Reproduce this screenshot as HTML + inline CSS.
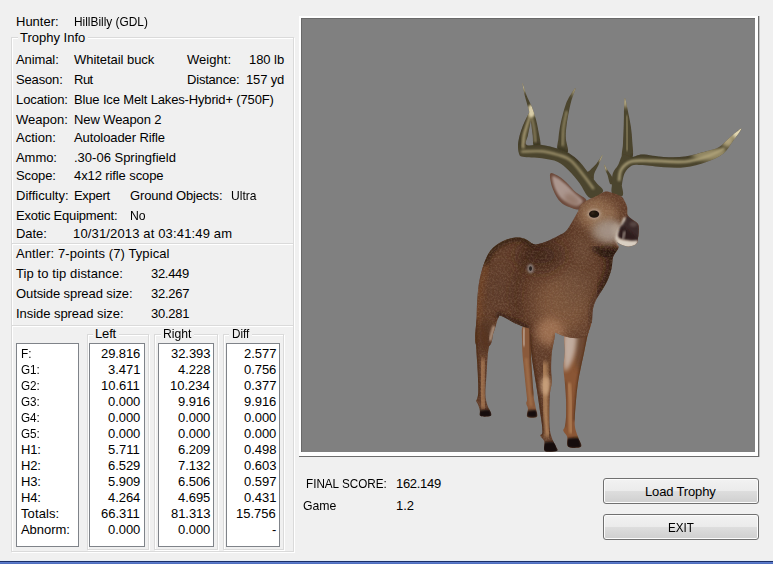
<!DOCTYPE html>
<html><head><meta charset="utf-8"><title>Trophy</title>
<style>
html,body{margin:0;padding:0}
body{width:773px;height:564px;overflow:hidden;background:#f0f0f0;position:relative;font-family:"Liberation Sans",sans-serif;font-size:13px;color:#000}
.t{position:absolute;white-space:pre;line-height:16px;height:16px}
.fr{position:absolute;box-sizing:border-box;border:1px solid #dadada;box-shadow:inset 1px 1px 0 #fff, 1px 1px 0 #fff}
.hl{position:absolute;height:1px;background:#dadada;box-shadow:0 1px 0 #fff}
.cap{position:absolute;background:#f0f0f0}
.lb{position:absolute;background:#fff;border:1px solid #7f8389;box-sizing:border-box}
.vo{position:absolute;left:299px;top:16px;width:460px;height:441px;box-sizing:border-box;background:#fff;border-right:1px solid #6e6e6e;border-bottom:1px solid #6e6e6e;box-shadow:1px 0 0 #c4c4c4}
.view{position:absolute;left:2px;top:2px;width:454px;height:434px;box-sizing:border-box;background:#808080;border-left:1px solid #696969;border-top:1px solid #696969;overflow:hidden}
.btn{position:absolute;box-sizing:border-box;border:1px solid #707070;border-radius:3px;background:linear-gradient(#f2f2f2 0%,#ebebeb 48%,#dddddd 52%,#cfcfcf 100%);box-shadow:inset 0 0 0 1px #fcfcfc}
.bar{position:absolute;left:0;top:560px;width:773px;height:4px;background:linear-gradient(#e4ecf6 0,#e4ecf6 1px,#1c2f66 1px,#1c2f66 2px,#6182d2 2px,#4a68ba 4px)}
</style></head><body>
<div class="fr" style="left:11px;top:37px;width:283px;height:515px"></div>
<div class="hl" style="left:12px;top:243px;width:281px"></div>
<div class="hl" style="left:12px;top:325px;width:281px"></div>
<div class="cap" style="left:18px;top:30px;width:70px;height:14px"></div>
<div class="fr" style="left:87px;top:334px;width:62px;height:216px"></div>
<div class="fr" style="left:154px;top:334px;width:64px;height:216px"></div>
<div class="fr" style="left:223px;top:334px;width:61px;height:216px"></div>
<div class="cap" style="left:93px;top:327px;width:26px;height:14px"></div>
<div class="cap" style="left:161px;top:327px;width:33px;height:14px"></div>
<div class="cap" style="left:229px;top:327px;width:23px;height:14px"></div>
<div class="lb" style="left:16px;top:343px;width:63px;height:204px"></div>
<div class="lb" style="left:89px;top:343px;width:56px;height:204px"></div>
<div class="lb" style="left:158px;top:343px;width:56px;height:204px"></div>
<div class="lb" style="left:226px;top:343px;width:54px;height:204px"></div>
<div class="vo"><div class="view"><svg width="773" height="564" viewBox="0 0 773 564" style="position:absolute;left:-302px;top:-19px"><defs>
<filter id="b1" x="-30%" y="-30%" width="160%" height="160%"><feGaussianBlur stdDeviation="1"/></filter>
<filter id="b2" x="-40%" y="-40%" width="180%" height="180%"><feGaussianBlur stdDeviation="2.2"/></filter>
<filter id="b4" x="-50%" y="-50%" width="200%" height="200%"><feGaussianBlur stdDeviation="4.5"/></filter>
<filter id="b8" x="-60%" y="-60%" width="220%" height="220%"><feGaussianBlur stdDeviation="8"/></filter>
<filter id="nz" x="0" y="0" width="100%" height="100%"><feTurbulence type="fractalNoise" baseFrequency="0.55" numOctaves="2" seed="7" result="n"/><feColorMatrix type="matrix" values="0 0 0 0 0.62  0 0 0 0 0.44  0 0 0 0 0.3  1.6 0 0 0 -0.62"/></filter>
<filter id="sm" x="-5%" y="-5%" width="110%" height="110%"><feGaussianBlur stdDeviation="0.4"/></filter>
<clipPath id="ca"><path d="M522.4,82.7 C522.7,82.5 524.9,91.0 526.4,94.9 C528.0,98.9 530.0,102.3 531.5,106.1 C533.1,110.0 534.4,114.0 535.5,118.1 C536.7,122.2 537.6,126.3 538.4,130.9 C539.2,135.4 541.1,142.7 540.3,145.2 C539.6,147.7 535.2,147.6 533.9,146.0 C532.7,144.4 533.1,139.5 532.7,135.6 C532.2,131.8 531.7,127.1 531.1,122.9 C530.4,118.6 529.9,114.6 528.8,110.1 C527.8,105.6 525.9,100.3 524.8,95.7 C523.8,91.2 522.2,82.8 522.4,82.7Z"/><path d="M575.6,88.2 C575.6,89.4 572.7,96.1 571.4,100.5 C570.2,105.0 569.1,110.4 568.2,114.9 C567.4,119.4 566.7,123.7 566.3,127.7 C565.9,131.6 565.6,134.8 565.9,138.8 C566.1,142.9 569.1,150.1 567.8,151.9 C566.4,153.7 559.4,151.9 557.9,149.7 C556.3,147.5 558.0,142.5 558.4,138.8 C558.7,135.2 559.1,131.6 559.8,127.7 C560.5,123.7 561.5,119.1 562.7,114.9 C563.8,110.6 565.2,105.7 566.6,102.1 C568.1,98.5 569.9,95.7 571.4,93.4 C572.9,91.0 575.6,87.0 575.6,88.2Z"/><path d="M602.6,155.1 C602.9,155.3 599.9,161.8 598.5,164.9 C597.1,167.9 595.1,170.9 594.3,173.4 C593.4,175.9 594.4,179.8 593.2,179.8 C592.0,179.8 587.3,175.0 586.8,173.4 C586.3,171.8 588.4,171.8 590.0,170.2 C591.6,168.6 594.3,166.3 596.4,163.8 C598.5,161.3 602.2,154.9 602.6,155.1Z"/><path d="M624.9,98.1 C625.6,98.4 627.1,107.1 628.1,111.9 C629.1,116.7 630.1,121.8 630.9,126.8 C631.6,131.8 632.1,136.6 632.3,141.7 C632.6,146.8 634.0,154.9 632.3,157.7 C630.7,160.4 623.9,160.6 622.3,158.3 C620.8,156.0 622.7,149.8 623.0,143.8 C623.2,137.9 623.7,128.2 623.8,122.6 C624.0,116.9 623.9,113.9 624.0,109.8 C624.2,105.7 624.2,97.7 624.9,98.1Z"/><path d="M604.3,164.5 C604.6,164.5 606.4,168.2 607.7,170.2 C608.9,172.2 611.0,174.6 611.9,176.6 C612.9,178.5 613.7,180.7 613.4,181.9 C613.1,183.2 611.2,185.1 610.2,184.0 C609.3,183.0 608.4,177.8 607.7,175.5 C606.9,173.2 606.1,172.1 605.5,170.2 C605.0,168.4 603.9,164.5 604.3,164.5Z"/><path d="M532.2,107.9 C532.3,108.9 531.8,113.5 531.4,116.5 C531.0,119.5 530.4,122.9 529.8,126.1 C529.2,129.3 528.4,132.5 527.9,135.6 C527.3,138.8 524.3,143.4 526.6,144.9 C528.9,146.4 536.7,144.3 541.9,144.9 C547.1,145.5 553.4,147.3 557.9,148.7 C562.4,150.1 565.3,150.9 569.0,153.2 C572.8,155.5 576.7,158.8 580.2,162.4 C583.7,166.1 587.4,171.6 590.2,175.1 C593.0,178.6 594.9,180.9 597.0,183.6 C599.1,186.3 604.1,189.1 603.0,191.5 C601.8,193.9 594.1,199.5 590.2,198.1 C586.3,196.7 582.9,187.6 579.4,183.0 C575.8,178.4 572.3,174.1 568.7,170.6 C565.1,167.1 562.3,164.0 557.9,162.0 C553.4,159.9 547.8,159.2 541.9,158.3 C536.1,157.4 526.6,157.6 522.8,156.7 C518.9,155.9 519.7,155.1 518.9,153.2 C518.1,151.3 517.9,148.1 518.0,145.2 C518.1,142.3 518.8,138.8 519.6,135.6 C520.4,132.4 521.6,129.1 522.8,126.1 C524.0,123.0 525.5,119.9 526.8,117.3 C528.0,114.6 529.5,111.7 530.4,110.1 C531.3,108.5 532.0,106.8 532.2,107.9Z"/><path d="M631.9,157.0 C635.2,157.0 637.2,154.5 642.6,154.5 C647.9,154.5 656.7,156.7 663.8,157.0 C670.9,157.4 678.0,157.6 685.1,156.6 C692.2,155.6 700.7,152.9 706.4,151.3 C712.1,149.7 715.2,149.3 719.1,147.0 C723.0,144.7 726.1,140.5 729.8,137.4 C733.5,134.4 741.1,127.7 741.5,128.5 C741.9,129.3 735.4,138.0 732.3,142.1 C729.3,146.3 727.7,150.1 723.4,153.4 C719.1,156.7 712.8,159.6 706.4,161.9 C700.0,164.2 692.2,166.3 685.1,167.2 C678.0,168.1 670.9,167.6 663.8,167.2 C656.7,166.9 647.9,165.4 642.6,165.1 C637.2,164.8 634.9,164.1 631.9,165.5 C628.9,167.0 626.2,170.1 624.5,173.6 C622.8,177.1 622.1,184.3 621.7,186.4 C621.3,188.5 621.8,184.6 621.9,186.2 C622.1,187.7 624.1,194.5 622.6,195.7 C621.0,197.0 614.1,195.4 612.3,193.6 C610.6,191.8 612.0,186.3 611.9,185.1 C611.8,183.9 611.6,188.3 611.7,186.4 C611.8,184.5 611.7,177.2 612.8,173.6 C613.8,170.1 616.4,168.2 618.1,165.1 C619.8,162.0 620.7,156.2 623.0,154.9 C625.3,153.5 628.7,157.1 631.9,157.0Z"/></clipPath><clipPath id="cb"><path d="M476.1,345.0 C473.9,340.2 476.5,324.1 476.7,316.5 C476.9,308.9 476.9,305.5 477.3,299.5 C477.8,293.4 478.3,286.3 479.5,280.3 C480.6,274.3 482.3,268.3 484.1,263.3 C486.0,258.3 487.7,254.1 490.5,250.5 C493.4,247.0 497.3,244.1 501.2,242.0 C505.1,239.9 510.0,238.3 513.9,237.8 C517.8,237.2 521.4,237.8 524.6,238.8 C527.8,239.9 530.8,243.3 533.1,244.1 C535.4,245.0 535.6,244.9 538.4,244.1 C541.2,243.4 546.4,241.5 550.1,239.9 C553.8,238.3 558.0,236.2 560.7,234.6 C563.5,233.0 564.7,232.5 566.6,230.4 C568.5,228.4 570.0,225.5 571.9,222.3 C573.8,219.2 576.1,214.9 577.9,211.7 C579.6,208.5 579.1,206.0 582.6,203.2 C586.0,200.4 594.8,196.8 598.5,194.9 C602.2,193.0 602.7,192.2 604.7,191.8 C606.8,191.4 608.2,191.7 610.9,192.4 C613.6,193.1 618.6,194.7 620.9,196.1 C623.1,197.6 623.5,199.2 624.6,201.1 C625.6,202.9 626.6,205.2 627.1,207.3 C627.5,209.4 627.1,212.0 627.3,213.5 C627.6,215.0 627.6,215.1 628.5,216.2 C629.5,217.4 631.7,219.1 633.3,220.3 C634.8,221.5 636.7,222.3 637.6,223.4 C638.5,224.5 638.7,225.3 638.8,227.1 C639.0,229.0 638.8,232.5 638.6,234.6 C638.4,236.6 637.9,238.3 637.7,239.5 C637.6,240.8 638.3,241.1 637.7,242.0 C637.2,242.9 636.1,244.4 634.5,245.1 C632.9,245.8 630.6,246.5 628.3,246.4 C626.0,246.3 622.7,245.2 620.9,244.5 C619.0,243.8 617.5,241.7 617.1,242.3 C616.7,242.8 619.2,245.3 618.5,247.7 C617.9,250.1 614.4,253.0 613.2,256.6 C612.0,260.1 612.5,264.9 611.4,269.0 C610.4,273.1 608.8,277.6 607.0,281.4 C605.2,285.3 602.7,288.8 600.8,292.1 C598.9,295.3 596.8,298.0 595.5,300.9 C594.1,303.9 593.4,306.2 592.8,309.8 C592.2,313.3 592.4,319.8 591.9,322.2 C591.4,324.6 590.7,321.9 589.9,324.1 C589.1,326.3 589.4,333.1 587.1,335.5 C584.8,337.8 580.1,338.2 576.3,338.3 C572.5,338.4 568.2,337.4 564.4,336.3 C560.6,335.2 557.3,333.1 553.6,331.8 C549.9,330.4 546.3,328.9 542.3,328.4 C538.3,327.8 533.8,329.1 529.5,328.4 C525.2,327.7 521.9,326.2 516.7,324.1 C511.5,322.0 502.1,314.9 498.3,315.6 C494.5,316.3 495.5,323.4 494.0,328.4 C492.6,333.3 492.8,342.6 489.8,345.4 C486.8,348.2 478.2,349.8 476.1,345.0Z"/><path d="M480.0,296.0 C477.7,298.5 478.2,311.0 477.5,318.0 C476.8,325.0 476.1,331.5 476.0,337.7 C475.9,344.0 476.4,349.6 476.7,355.5 C477.0,361.4 477.5,367.3 477.8,373.2 C478.0,379.1 478.4,386.8 478.3,390.9 C478.2,395.1 477.8,396.4 477.4,398.0 C477.1,399.7 476.1,399.8 476.2,400.9 C476.3,401.9 477.3,402.6 477.9,404.2 C478.6,405.8 479.5,408.4 479.9,410.4 C480.3,412.4 478.9,415.2 480.6,416.1 C482.3,417.0 488.5,416.7 490.2,416.1 C491.9,415.5 491.2,414.1 490.9,412.6 C490.5,411.0 488.9,409.0 488.0,406.9 C487.2,404.8 486.4,402.4 485.9,399.8 C485.5,397.1 485.3,395.4 485.4,390.9 C485.5,386.5 486.2,379.1 486.6,373.2 C487.0,367.3 487.2,360.5 487.7,355.5 C488.2,350.4 488.7,347.2 489.8,343.0 C490.9,338.9 493.0,334.5 494.3,330.6 C495.5,326.8 496.5,322.7 497.3,320.0 C498.0,317.3 499.9,317.0 498.9,314.2 C497.9,311.3 494.3,305.9 491.2,302.8 C488.1,299.8 482.3,293.5 480.0,296.0Z"/><path d="M531.2,320.0 C527.2,322.5 530.0,329.5 530.0,334.9 C530.0,340.3 530.6,346.5 531.2,352.3 C531.8,358.1 532.7,363.5 533.7,369.7 C534.6,375.9 536.0,383.4 536.9,389.6 C537.9,395.8 538.6,401.2 539.4,407.0 C540.2,412.8 541.4,420.0 541.9,424.3 C542.4,428.7 542.6,431.1 542.4,433.0 C542.1,434.9 540.1,434.3 540.4,435.8 C540.7,437.2 543.6,439.2 544.4,441.7 C545.1,444.3 542.8,449.4 544.9,450.9 C546.9,452.5 554.9,451.6 556.8,450.9 C558.7,450.2 556.8,448.7 556.1,446.7 C555.3,444.8 553.4,442.2 552.3,439.3 C551.3,436.4 550.3,433.5 549.8,429.3 C549.3,425.2 549.3,420.2 549.3,414.4 C549.3,408.6 549.4,399.9 549.8,394.5 C550.3,389.2 551.6,386.3 551.8,382.1 C552.0,378.0 551.1,374.7 551.1,369.7 C551.1,364.7 551.2,358.1 551.8,352.3 C552.5,346.5 554.4,340.3 554.8,334.9 C555.2,329.5 558.3,322.5 554.3,320.0 C550.4,317.5 535.3,317.5 531.2,320.0Z"/></clipPath><clipPath id="ce"><path d="M550.2,173.8 C551.0,171.9 554.0,173.8 556.6,175.1 C559.2,176.5 562.7,179.0 566.0,181.9 C569.2,184.8 572.8,189.5 576.2,192.6 C579.6,195.6 585.5,197.4 586.4,200.2 C587.3,203.0 584.6,208.5 581.5,209.6 C578.4,210.6 571.5,208.3 567.7,206.6 C563.8,204.9 560.9,202.7 558.3,199.4 C555.7,196.0 553.3,190.9 551.9,186.6 C550.6,182.3 549.4,175.7 550.2,173.8Z"/></clipPath><clipPath id="cf"><path d="M522.6,327.1 C521.1,329.5 522.1,336.5 522.1,341.3 C522.1,346.0 522.2,350.1 522.6,355.5 C523.0,360.8 523.8,367.3 524.4,373.2 C525.0,379.1 525.7,386.5 526.2,390.9 C526.6,395.4 527.1,397.7 527.1,399.8 C527.1,401.9 526.0,401.9 526.2,403.3 C526.3,404.8 527.7,406.4 527.9,408.7 C528.2,410.9 525.9,415.4 527.4,416.8 C528.9,418.2 535.4,418.2 536.8,416.8 C538.2,415.4 536.4,411.5 535.9,408.7 C535.5,405.8 534.6,402.7 534.1,399.8 C533.7,396.8 533.6,395.4 533.3,390.9 C532.9,386.5 532.4,379.1 532.0,373.2 C531.6,367.3 531.1,361.4 531.0,355.5 C530.8,349.6 531.0,342.5 531.0,337.7 C531.0,333.0 532.3,328.9 531.0,327.1 C529.6,325.3 524.1,324.7 522.6,327.1Z"/><path d="M564.8,329.9 C563.1,334.1 565.0,346.1 564.8,352.3 C564.5,358.5 563.5,362.2 563.5,367.2 C563.5,372.2 564.3,376.7 564.8,382.1 C565.2,387.5 565.8,393.7 566.0,399.5 C566.2,405.3 566.2,412.3 566.0,416.9 C565.8,421.4 565.2,424.5 564.8,426.8 C564.3,429.2 562.8,429.2 563.3,430.8 C563.7,432.5 566.4,434.1 567.2,436.8 C568.1,439.4 566.0,445.1 568.2,446.7 C570.5,448.4 579.2,448.2 580.9,446.7 C582.6,445.3 579.3,440.9 578.4,438.0 C577.5,435.1 576.1,432.4 575.4,429.3 C574.8,426.2 574.6,423.9 574.7,419.4 C574.8,414.8 575.4,407.8 575.9,402.0 C576.4,396.2 576.8,390.4 577.7,384.6 C578.5,378.8 579.8,372.6 580.9,367.2 C582.0,361.8 583.0,357.7 584.1,352.3 C585.2,346.9 586.5,340.0 587.6,334.9 C588.7,329.9 592.7,323.2 590.6,322.0 C588.4,320.7 579.0,326.1 574.7,327.5 C570.4,328.8 566.4,325.8 564.8,329.9Z"/></clipPath></defs><g filter="url(#sm)">
<path d="M522.4,82.7 C522.7,82.5 524.9,91.0 526.4,94.9 C528.0,98.9 530.0,102.3 531.5,106.1 C533.1,110.0 534.4,114.0 535.5,118.1 C536.7,122.2 537.6,126.3 538.4,130.9 C539.2,135.4 541.1,142.7 540.3,145.2 C539.6,147.7 535.2,147.6 533.9,146.0 C532.7,144.4 533.1,139.5 532.7,135.6 C532.2,131.8 531.7,127.1 531.1,122.9 C530.4,118.6 529.9,114.6 528.8,110.1 C527.8,105.6 525.9,100.3 524.8,95.7 C523.8,91.2 522.2,82.8 522.4,82.7Z" fill="#4c442d" />
<path d="M575.6,88.2 C575.6,89.4 572.7,96.1 571.4,100.5 C570.2,105.0 569.1,110.4 568.2,114.9 C567.4,119.4 566.7,123.7 566.3,127.7 C565.9,131.6 565.6,134.8 565.9,138.8 C566.1,142.9 569.1,150.1 567.8,151.9 C566.4,153.7 559.4,151.9 557.9,149.7 C556.3,147.5 558.0,142.5 558.4,138.8 C558.7,135.2 559.1,131.6 559.8,127.7 C560.5,123.7 561.5,119.1 562.7,114.9 C563.8,110.6 565.2,105.7 566.6,102.1 C568.1,98.5 569.9,95.7 571.4,93.4 C572.9,91.0 575.6,87.0 575.6,88.2Z" fill="#4c442d" />
<path d="M602.6,155.1 C602.9,155.3 599.9,161.8 598.5,164.9 C597.1,167.9 595.1,170.9 594.3,173.4 C593.4,175.9 594.4,179.8 593.2,179.8 C592.0,179.8 587.3,175.0 586.8,173.4 C586.3,171.8 588.4,171.8 590.0,170.2 C591.6,168.6 594.3,166.3 596.4,163.8 C598.5,161.3 602.2,154.9 602.6,155.1Z" fill="#4c442d" />
<path d="M624.9,98.1 C625.6,98.4 627.1,107.1 628.1,111.9 C629.1,116.7 630.1,121.8 630.9,126.8 C631.6,131.8 632.1,136.6 632.3,141.7 C632.6,146.8 634.0,154.9 632.3,157.7 C630.7,160.4 623.9,160.6 622.3,158.3 C620.8,156.0 622.7,149.8 623.0,143.8 C623.2,137.9 623.7,128.2 623.8,122.6 C624.0,116.9 623.9,113.9 624.0,109.8 C624.2,105.7 624.2,97.7 624.9,98.1Z" fill="#4c442d" />
<path d="M604.3,164.5 C604.6,164.5 606.4,168.2 607.7,170.2 C608.9,172.2 611.0,174.6 611.9,176.6 C612.9,178.5 613.7,180.7 613.4,181.9 C613.1,183.2 611.2,185.1 610.2,184.0 C609.3,183.0 608.4,177.8 607.7,175.5 C606.9,173.2 606.1,172.1 605.5,170.2 C605.0,168.4 603.9,164.5 604.3,164.5Z" fill="#4c442d" />
<path d="M532.2,107.9 C532.3,108.9 531.8,113.5 531.4,116.5 C531.0,119.5 530.4,122.9 529.8,126.1 C529.2,129.3 528.4,132.5 527.9,135.6 C527.3,138.8 524.3,143.4 526.6,144.9 C528.9,146.4 536.7,144.3 541.9,144.9 C547.1,145.5 553.4,147.3 557.9,148.7 C562.4,150.1 565.3,150.9 569.0,153.2 C572.8,155.5 576.7,158.8 580.2,162.4 C583.7,166.1 587.4,171.6 590.2,175.1 C593.0,178.6 594.9,180.9 597.0,183.6 C599.1,186.3 604.1,189.1 603.0,191.5 C601.8,193.9 594.1,199.5 590.2,198.1 C586.3,196.7 582.9,187.6 579.4,183.0 C575.8,178.4 572.3,174.1 568.7,170.6 C565.1,167.1 562.3,164.0 557.9,162.0 C553.4,159.9 547.8,159.2 541.9,158.3 C536.1,157.4 526.6,157.6 522.8,156.7 C518.9,155.9 519.7,155.1 518.9,153.2 C518.1,151.3 517.9,148.1 518.0,145.2 C518.1,142.3 518.8,138.8 519.6,135.6 C520.4,132.4 521.6,129.1 522.8,126.1 C524.0,123.0 525.5,119.9 526.8,117.3 C528.0,114.6 529.5,111.7 530.4,110.1 C531.3,108.5 532.0,106.8 532.2,107.9Z" fill="#4c442d" />
<path d="M631.9,157.0 C635.2,157.0 637.2,154.5 642.6,154.5 C647.9,154.5 656.7,156.7 663.8,157.0 C670.9,157.4 678.0,157.6 685.1,156.6 C692.2,155.6 700.7,152.9 706.4,151.3 C712.1,149.7 715.2,149.3 719.1,147.0 C723.0,144.7 726.1,140.5 729.8,137.4 C733.5,134.4 741.1,127.7 741.5,128.5 C741.9,129.3 735.4,138.0 732.3,142.1 C729.3,146.3 727.7,150.1 723.4,153.4 C719.1,156.7 712.8,159.6 706.4,161.9 C700.0,164.2 692.2,166.3 685.1,167.2 C678.0,168.1 670.9,167.6 663.8,167.2 C656.7,166.9 647.9,165.4 642.6,165.1 C637.2,164.8 634.9,164.1 631.9,165.5 C628.9,167.0 626.2,170.1 624.5,173.6 C622.8,177.1 622.1,184.3 621.7,186.4 C621.3,188.5 621.8,184.6 621.9,186.2 C622.1,187.7 624.1,194.5 622.6,195.7 C621.0,197.0 614.1,195.4 612.3,193.6 C610.6,191.8 612.0,186.3 611.9,185.1 C611.8,183.9 611.6,188.3 611.7,186.4 C611.8,184.5 611.7,177.2 612.8,173.6 C613.8,170.1 616.4,168.2 618.1,165.1 C619.8,162.0 620.7,156.2 623.0,154.9 C625.3,153.5 628.7,157.1 631.9,157.0Z" fill="#4c442d" />
</g>
<g clip-path="url(#ca)">
<path d="M522.0,151.6 C525.3,151.5 535.9,150.7 541.9,151.3 C547.9,151.8 553.1,153.3 557.9,154.8 C562.7,156.3 566.3,156.9 570.6,160.4 C574.9,163.8 579.9,170.9 583.6,175.5 C587.4,180.2 591.6,186.2 593.2,188.3" fill="none" stroke="#a0946e" stroke-width="2.4" stroke-linecap="round" stroke-linejoin="round" filter="url(#b1)" opacity="0.95"/>
<path d="M619.1,180.0 C619.5,178.2 619.1,172.5 621.3,169.4 C623.4,166.2 626.6,162.7 631.9,161.3 C637.2,159.9 644.3,160.8 653.2,160.9 C662.1,160.9 676.2,162.4 685.1,161.7 C694.0,161.0 700.0,158.7 706.4,156.6 C712.8,154.5 720.6,150.4 723.4,149.1" fill="none" stroke="#ada27a" stroke-width="2.6" stroke-linecap="round" stroke-linejoin="round" filter="url(#b1)" opacity="0.95"/>
<path d="M627.2,150.2 C627.2,147.4 627.4,138.9 627.2,133.2 C627.1,127.5 626.5,119.0 626.4,116.2" fill="none" stroke="#a0946e" stroke-width="1.8" stroke-linecap="round" stroke-linejoin="round" filter="url(#b1)" opacity="0.95"/>
<path d="M562.7,145.2 C562.8,142.3 562.8,133.2 563.5,127.7 C564.1,122.1 566.1,114.4 566.6,111.7" fill="none" stroke="#a0946e" stroke-width="2.0" stroke-linecap="round" stroke-linejoin="round" filter="url(#b1)" opacity="0.95"/>
<path d="M535.5,142.0 C535.3,139.6 534.7,132.4 533.9,127.7 C533.1,122.9 531.3,115.7 530.7,113.3" fill="none" stroke="#9a8e6a" stroke-width="2.0" stroke-linecap="round" stroke-linejoin="round" filter="url(#b1)" opacity="0.9"/>
<path d="M523.1,146.8 C523.2,144.9 523.5,139.1 524.0,135.6 C524.6,132.2 525.7,129.3 526.6,126.1 C527.5,122.9 529.0,118.1 529.5,116.5" fill="none" stroke="#a39670" stroke-width="3.2" stroke-linecap="round" stroke-linejoin="round" filter="url(#b1)" opacity="0.95"/>
<path d="M518.3,145.2 C518.6,143.6 519.1,138.8 519.9,135.6 C520.7,132.4 521.9,129.1 523.1,126.1 C524.3,123.0 526.4,118.8 527.1,117.3" fill="none" stroke="#3a3422" stroke-width="1.5" stroke-linecap="round" stroke-linejoin="round" filter="url(#b1)" opacity="0.7"/>
<path d="M631.9,156.2 C633.7,155.8 637.2,153.8 642.6,153.8 C647.9,153.8 656.7,155.9 663.8,156.2 C670.9,156.5 678.0,156.7 685.1,155.7 C692.2,154.8 702.8,151.5 706.4,150.6" fill="none" stroke="#2e2a1a" stroke-width="1.6" stroke-linecap="round" stroke-linejoin="round" filter="url(#b1)" opacity="0.8"/>
<path d="M526.0,144.6 C528.6,144.5 536.6,143.7 541.9,144.3 C547.2,144.8 553.4,146.7 557.9,148.1 C562.4,149.5 565.3,150.2 569.0,152.6 C572.8,154.9 578.4,160.4 580.2,162.0" fill="none" stroke="#2e2a1a" stroke-width="1.6" stroke-linecap="round" stroke-linejoin="round" filter="url(#b1)" opacity="0.8"/>
<ellipse cx="710.6" cy="154.5" rx="19.1" ry="6.4" fill="#b3a67c" filter="url(#b2)" opacity="0.7"/>
<ellipse cx="738.3" cy="131.1" rx="8.5" ry="8.5" fill="#e4d9b4" filter="url(#b2)"/>
<ellipse cx="727.7" cy="140.6" rx="6.4" ry="6.4" fill="#c9ba8e" filter="url(#b2)" opacity="0.8"/>
<ellipse cx="624.9" cy="100.2" rx="5.3" ry="7.4" fill="#c9bd98" filter="url(#b2)" opacity="0.8"/>
<ellipse cx="522.8" cy="84.6" rx="4.8" ry="8.0" fill="#d8cca4" filter="url(#b2)" opacity="0.9"/>
<ellipse cx="531.5" cy="110.9" rx="4.0" ry="6.4" fill="#e0d4ae" filter="url(#b1)" opacity="0.95"/>
<ellipse cx="575.1" cy="90.2" rx="4.0" ry="6.4" fill="#b9ad88" filter="url(#b2)" opacity="0.8"/>
<ellipse cx="602.1" cy="157.4" rx="3.8" ry="6.4" fill="#c4b890" filter="url(#b1)" opacity="0.8"/>
<ellipse cx="604.9" cy="166.0" rx="3.2" ry="5.3" fill="#c4b890" filter="url(#b1)" opacity="0.8"/>
</g>
<g filter="url(#sm)">
<path d="M522.6,327.1 C521.1,329.5 522.1,336.5 522.1,341.3 C522.1,346.0 522.2,350.1 522.6,355.5 C523.0,360.8 523.8,367.3 524.4,373.2 C525.0,379.1 525.7,386.5 526.2,390.9 C526.6,395.4 527.1,397.7 527.1,399.8 C527.1,401.9 526.0,401.9 526.2,403.3 C526.3,404.8 527.7,406.4 527.9,408.7 C528.2,410.9 525.9,415.4 527.4,416.8 C528.9,418.2 535.4,418.2 536.8,416.8 C538.2,415.4 536.4,411.5 535.9,408.7 C535.5,405.8 534.6,402.7 534.1,399.8 C533.7,396.8 533.6,395.4 533.3,390.9 C532.9,386.5 532.4,379.1 532.0,373.2 C531.6,367.3 531.1,361.4 531.0,355.5 C530.8,349.6 531.0,342.5 531.0,337.7 C531.0,333.0 532.3,328.9 531.0,327.1 C529.6,325.3 524.1,324.7 522.6,327.1Z" fill="#8a5a3a" />
<path d="M564.8,329.9 C563.1,334.1 565.0,346.1 564.8,352.3 C564.5,358.5 563.5,362.2 563.5,367.2 C563.5,372.2 564.3,376.7 564.8,382.1 C565.2,387.5 565.8,393.7 566.0,399.5 C566.2,405.3 566.2,412.3 566.0,416.9 C565.8,421.4 565.2,424.5 564.8,426.8 C564.3,429.2 562.8,429.2 563.3,430.8 C563.7,432.5 566.4,434.1 567.2,436.8 C568.1,439.4 566.0,445.1 568.2,446.7 C570.5,448.4 579.2,448.2 580.9,446.7 C582.6,445.3 579.3,440.9 578.4,438.0 C577.5,435.1 576.1,432.4 575.4,429.3 C574.8,426.2 574.6,423.9 574.7,419.4 C574.8,414.8 575.4,407.8 575.9,402.0 C576.4,396.2 576.8,390.4 577.7,384.6 C578.5,378.8 579.8,372.6 580.9,367.2 C582.0,361.8 583.0,357.7 584.1,352.3 C585.2,346.9 586.5,340.0 587.6,334.9 C588.7,329.9 592.7,323.2 590.6,322.0 C588.4,320.7 579.0,326.1 574.7,327.5 C570.4,328.8 566.4,325.8 564.8,329.9Z" fill="#8a5636" />
</g>
<g clip-path="url(#cf)">
<path d="M523.9,328.9 C523.8,330.3 523.5,335.1 523.5,337.7 C523.5,340.4 523.8,343.6 523.9,344.8" fill="none" stroke="#bda796" stroke-width="3.2" stroke-linecap="round" stroke-linejoin="round" filter="url(#b1)" opacity="0.85"/>
<path d="M530.2,330.6 C530.4,334.8 530.6,348.4 531.0,355.5 C531.3,362.6 531.9,366.7 532.4,373.2 C532.8,379.7 533.6,390.9 533.8,394.5" fill="none" stroke="#4a2a18" stroke-width="2.5" stroke-linecap="round" stroke-linejoin="round" filter="url(#b1)" opacity="0.8"/>
<path d="M526.2,359.0 C526.5,362.0 527.4,370.8 527.9,376.7 C528.5,382.6 529.2,389.7 529.7,394.5 C530.2,399.2 530.8,403.3 531.0,405.1" fill="none" stroke="#a87650" stroke-width="2.5" stroke-linecap="round" stroke-linejoin="round" filter="url(#b1)" opacity="0.8"/>
<path d="M527.1,410.8 C527.7,410.3 536.1,409.6 536.8,410.1 C537.5,410.5 538.0,417.0 537.3,417.5 C536.7,418.0 527.7,418.0 527.1,417.5 C526.4,417.1 526.4,411.3 527.1,410.8Z" fill="#15100d" filter="url(#b1)"/>
<path d="M575.9,325.0 C578.5,320.8 588.4,321.2 590.1,325.0 C591.7,328.7 587.3,340.7 585.9,347.3 C584.5,354.0 583.0,361.0 581.6,364.7 C580.3,368.4 578.8,372.2 577.7,369.7 C576.5,367.2 575.0,357.3 574.7,349.8 C574.4,342.4 573.4,329.1 575.9,325.0Z" fill="#6a4a34" filter="url(#b2)" opacity="0.9"/>
<path d="M564.3,332.4 C566.3,326.6 574.0,329.9 575.9,332.4 C577.9,334.9 576.5,342.8 575.9,347.3 C575.4,351.9 574.2,356.0 572.7,359.8 C571.3,363.5 568.7,368.4 567.2,369.7 C565.7,370.9 564.3,373.4 563.8,367.2 C563.3,361.0 562.2,338.2 564.3,332.4Z" fill="#c8b6aa" filter="url(#b2)" opacity="0.9"/>
<path d="M589.1,325.0 C588.4,329.5 586.0,345.3 584.6,352.3 C583.3,359.3 582.2,361.8 581.1,367.2 C580.1,372.6 579.0,378.8 578.2,384.6 C577.4,390.4 576.9,396.2 576.4,402.0 C575.9,407.8 575.4,416.5 575.2,419.4" fill="none" stroke="#4a2a18" stroke-width="3" stroke-linecap="round" stroke-linejoin="round" filter="url(#b1)" opacity="0.8"/>
<path d="M569.2,384.6 C569.4,387.5 570.3,396.2 570.5,402.0 C570.7,407.8 570.4,414.4 570.5,419.4 C570.5,424.3 570.9,429.7 571.0,431.8" fill="none" stroke="#b07e54" stroke-width="4" stroke-linecap="round" stroke-linejoin="round" filter="url(#b1)" opacity="0.85"/>
<path d="M564.8,382.1 C564.9,385.0 565.6,393.7 565.7,399.5 C565.9,405.3 565.9,412.3 565.7,416.9 C565.6,421.4 564.9,425.2 564.8,426.8" fill="none" stroke="#5a3520" stroke-width="1.5" stroke-linecap="round" stroke-linejoin="round" filter="url(#b1)" opacity="0.7"/>
<path d="M566.7,438.8 C567.5,438.1 578.2,437.2 579.2,437.8 C580.2,438.4 582.4,447.3 581.6,448.0 C580.9,448.6 568.2,448.6 567.2,448.0 C566.2,447.3 565.9,439.4 566.7,438.8Z" fill="#15100d" filter="url(#b1)"/>
</g>
<g filter="url(#sm)">
<path d="M550.2,173.8 C551.0,171.9 554.0,173.8 556.6,175.1 C559.2,176.5 562.7,179.0 566.0,181.9 C569.2,184.8 572.8,189.5 576.2,192.6 C579.6,195.6 585.5,197.4 586.4,200.2 C587.3,203.0 584.6,208.5 581.5,209.6 C578.4,210.6 571.5,208.3 567.7,206.6 C563.8,204.9 560.9,202.7 558.3,199.4 C555.7,196.0 553.3,190.9 551.9,186.6 C550.6,182.3 549.4,175.7 550.2,173.8Z" fill="#6c4a3a" />
</g>
<g clip-path="url(#ce)">
<path d="M552.3,176.6 C552.8,175.0 554.8,176.4 557.0,177.7 C559.2,178.9 562.5,181.4 565.5,184.0 C568.5,186.7 572.3,190.8 575.1,193.6 C577.9,196.5 582.2,199.0 582.6,201.1 C582.9,203.1 579.5,205.4 577.2,205.7 C574.9,206.1 571.6,204.6 568.7,203.2 C565.9,201.8 562.6,199.9 560.2,197.2 C557.8,194.6 555.8,190.7 554.5,187.2 C553.2,183.8 551.9,178.2 552.3,176.6Z" fill="#ab968e" filter="url(#b1)"/>
<ellipse cx="571.9" cy="200.0" rx="8.5" ry="5.3" fill="#8a6a5a" filter="url(#b2)" opacity="0.6" transform="rotate(35 571.9 200.0)"/>
</g>
<g filter="url(#sm)">
<path d="M476.1,345.0 C473.9,340.2 476.5,324.1 476.7,316.5 C476.9,308.9 476.9,305.5 477.3,299.5 C477.8,293.4 478.3,286.3 479.5,280.3 C480.6,274.3 482.3,268.3 484.1,263.3 C486.0,258.3 487.7,254.1 490.5,250.5 C493.4,247.0 497.3,244.1 501.2,242.0 C505.1,239.9 510.0,238.3 513.9,237.8 C517.8,237.2 521.4,237.8 524.6,238.8 C527.8,239.9 530.8,243.3 533.1,244.1 C535.4,245.0 535.6,244.9 538.4,244.1 C541.2,243.4 546.4,241.5 550.1,239.9 C553.8,238.3 558.0,236.2 560.7,234.6 C563.5,233.0 564.7,232.5 566.6,230.4 C568.5,228.4 570.0,225.5 571.9,222.3 C573.8,219.2 576.1,214.9 577.9,211.7 C579.6,208.5 579.1,206.0 582.6,203.2 C586.0,200.4 594.8,196.8 598.5,194.9 C602.2,193.0 602.7,192.2 604.7,191.8 C606.8,191.4 608.2,191.7 610.9,192.4 C613.6,193.1 618.6,194.7 620.9,196.1 C623.1,197.6 623.5,199.2 624.6,201.1 C625.6,202.9 626.6,205.2 627.1,207.3 C627.5,209.4 627.1,212.0 627.3,213.5 C627.6,215.0 627.6,215.1 628.5,216.2 C629.5,217.4 631.7,219.1 633.3,220.3 C634.8,221.5 636.7,222.3 637.6,223.4 C638.5,224.5 638.7,225.3 638.8,227.1 C639.0,229.0 638.8,232.5 638.6,234.6 C638.4,236.6 637.9,238.3 637.7,239.5 C637.6,240.8 638.3,241.1 637.7,242.0 C637.2,242.9 636.1,244.4 634.5,245.1 C632.9,245.8 630.6,246.5 628.3,246.4 C626.0,246.3 622.7,245.2 620.9,244.5 C619.0,243.8 617.5,241.7 617.1,242.3 C616.7,242.8 619.2,245.3 618.5,247.7 C617.9,250.1 614.4,253.0 613.2,256.6 C612.0,260.1 612.5,264.9 611.4,269.0 C610.4,273.1 608.8,277.6 607.0,281.4 C605.2,285.3 602.7,288.8 600.8,292.1 C598.9,295.3 596.8,298.0 595.5,300.9 C594.1,303.9 593.4,306.2 592.8,309.8 C592.2,313.3 592.4,319.8 591.9,322.2 C591.4,324.6 590.7,321.9 589.9,324.1 C589.1,326.3 589.4,333.1 587.1,335.5 C584.8,337.8 580.1,338.2 576.3,338.3 C572.5,338.4 568.2,337.4 564.4,336.3 C560.6,335.2 557.3,333.1 553.6,331.8 C549.9,330.4 546.3,328.9 542.3,328.4 C538.3,327.8 533.8,329.1 529.5,328.4 C525.2,327.7 521.9,326.2 516.7,324.1 C511.5,322.0 502.1,314.9 498.3,315.6 C494.5,316.3 495.5,323.4 494.0,328.4 C492.6,333.3 492.8,342.6 489.8,345.4 C486.8,348.2 478.2,349.8 476.1,345.0Z" fill="#603c29" />
<path d="M480.0,296.0 C477.7,298.5 478.2,311.0 477.5,318.0 C476.8,325.0 476.1,331.5 476.0,337.7 C475.9,344.0 476.4,349.6 476.7,355.5 C477.0,361.4 477.5,367.3 477.8,373.2 C478.0,379.1 478.4,386.8 478.3,390.9 C478.2,395.1 477.8,396.4 477.4,398.0 C477.1,399.7 476.1,399.8 476.2,400.9 C476.3,401.9 477.3,402.6 477.9,404.2 C478.6,405.8 479.5,408.4 479.9,410.4 C480.3,412.4 478.9,415.2 480.6,416.1 C482.3,417.0 488.5,416.7 490.2,416.1 C491.9,415.5 491.2,414.1 490.9,412.6 C490.5,411.0 488.9,409.0 488.0,406.9 C487.2,404.8 486.4,402.4 485.9,399.8 C485.5,397.1 485.3,395.4 485.4,390.9 C485.5,386.5 486.2,379.1 486.6,373.2 C487.0,367.3 487.2,360.5 487.7,355.5 C488.2,350.4 488.7,347.2 489.8,343.0 C490.9,338.9 493.0,334.5 494.3,330.6 C495.5,326.8 496.5,322.7 497.3,320.0 C498.0,317.3 499.9,317.0 498.9,314.2 C497.9,311.3 494.3,305.9 491.2,302.8 C488.1,299.8 482.3,293.5 480.0,296.0Z" fill="#603c29" />
<path d="M531.2,320.0 C527.2,322.5 530.0,329.5 530.0,334.9 C530.0,340.3 530.6,346.5 531.2,352.3 C531.8,358.1 532.7,363.5 533.7,369.7 C534.6,375.9 536.0,383.4 536.9,389.6 C537.9,395.8 538.6,401.2 539.4,407.0 C540.2,412.8 541.4,420.0 541.9,424.3 C542.4,428.7 542.6,431.1 542.4,433.0 C542.1,434.9 540.1,434.3 540.4,435.8 C540.7,437.2 543.6,439.2 544.4,441.7 C545.1,444.3 542.8,449.4 544.9,450.9 C546.9,452.5 554.9,451.6 556.8,450.9 C558.7,450.2 556.8,448.7 556.1,446.7 C555.3,444.8 553.4,442.2 552.3,439.3 C551.3,436.4 550.3,433.5 549.8,429.3 C549.3,425.2 549.3,420.2 549.3,414.4 C549.3,408.6 549.4,399.9 549.8,394.5 C550.3,389.2 551.6,386.3 551.8,382.1 C552.0,378.0 551.1,374.7 551.1,369.7 C551.1,364.7 551.2,358.1 551.8,352.3 C552.5,346.5 554.4,340.3 554.8,334.9 C555.2,329.5 558.3,322.5 554.3,320.0 C550.4,317.5 535.3,317.5 531.2,320.0Z" fill="#603c29" />
</g>
<g clip-path="url(#cb)">
<ellipse cx="562.0" cy="305.0" rx="26.0" ry="30.0" fill="#80593e" filter="url(#b8)" opacity="0.9"/>
<ellipse cx="550.0" cy="332.0" rx="14.0" ry="14.0" fill="#a07252" filter="url(#b4)" opacity="0.9"/>
<ellipse cx="575.0" cy="285.0" rx="18.0" ry="25.0" fill="#6e4e38" filter="url(#b8)" opacity="0.6"/>
<ellipse cx="500.0" cy="290.0" rx="12.0" ry="25.0" fill="#5a3a2a" filter="url(#b8)" opacity="0.6"/>
<ellipse cx="540.0" cy="255.0" rx="22.0" ry="14.0" fill="#3a2418" filter="url(#b8)" opacity="0.85"/>
<path d="M483.7,263.3 C484.8,261.2 487.2,254.1 490.1,250.5 C493.0,246.9 497.2,243.8 501.2,241.6 C505.1,239.4 510.0,237.9 513.9,237.3 C517.8,236.8 521.4,237.3 524.6,238.4 C527.8,239.5 531.7,242.8 533.1,243.7" fill="none" stroke="#2e1a10" stroke-width="9" stroke-linecap="round" stroke-linejoin="round" filter="url(#b2)" opacity="0.75"/>
<path d="M478.2,339.9 C478.3,336.0 478.4,323.2 478.6,316.5 C478.8,309.8 479.0,305.1 479.5,299.5 C480.0,293.8 480.5,287.8 481.6,282.4 C482.7,277.1 485.1,270.0 485.9,267.6" fill="none" stroke="#6e4228" stroke-width="7" stroke-linecap="round" stroke-linejoin="round" filter="url(#b2)" opacity="0.8"/>
<path d="M535.2,245.2 C533.8,247.5 529.5,253.2 526.7,259.0 C523.9,264.9 520.1,273.9 518.2,280.3 C516.2,286.7 515.0,291.7 515.0,297.3 C515.0,303.0 517.7,311.5 518.2,314.4" fill="none" stroke="#3e2416" stroke-width="8" stroke-linecap="round" stroke-linejoin="round" filter="url(#b4)" opacity="0.55"/>
<path d="M499.0,315.4 C500.5,316.1 504.4,318.3 507.6,319.7 C510.7,321.1 515.0,322.5 518.2,323.9 C521.4,325.4 525.3,327.5 526.7,328.2" fill="none" stroke="#2a160c" stroke-width="7" stroke-linecap="round" stroke-linejoin="round" filter="url(#b2)" opacity="0.7"/>
<path d="M607.9,251.3 C608.8,252.8 612.5,257.0 613.2,260.1 C613.9,263.2 613.1,266.3 612.3,269.9 C611.5,273.5 609.9,278.0 608.2,281.8 C606.6,285.5 603.5,290.6 602.6,292.4" fill="none" stroke="#2a180e" stroke-width="13" stroke-linecap="round" stroke-linejoin="round" filter="url(#b4)" opacity="0.9"/>
<path d="M602.6,292.4 C601.7,293.9 598.6,298.3 597.2,301.3 C595.9,304.2 595.0,306.7 594.4,310.1 C593.7,313.6 593.5,320.2 593.3,322.2" fill="none" stroke="#3a2416" stroke-width="7" stroke-linecap="round" stroke-linejoin="round" filter="url(#b4)" opacity="0.7"/>
<path d="M595.5,248.6 C597.2,249.5 602.7,253.3 606.1,253.9 C609.5,254.5 614.2,252.5 615.9,252.2" fill="none" stroke="#26160e" stroke-width="8" stroke-linecap="round" stroke-linejoin="round" filter="url(#b2)" opacity="0.8"/>
<path d="M538.4,243.7 C540.4,243.0 546.4,241.1 550.1,239.5 C553.8,237.9 557.9,236.2 560.7,234.1 C563.6,232.1 566.1,228.3 567.1,227.1" fill="none" stroke="#3a2216" stroke-width="6" stroke-linecap="round" stroke-linejoin="round" filter="url(#b2)" opacity="0.6"/>
<ellipse cx="583.0" cy="250.0" rx="10.0" ry="14.0" fill="#6a4a36" filter="url(#b4)" opacity="0.7"/>
<ellipse cx="598.0" cy="214.0" rx="20.0" ry="17.0" fill="#916c50" filter="url(#b4)" opacity="0.95"/>
<ellipse cx="606.3" cy="231.2" rx="14.9" ry="10.6" fill="#94806e" filter="url(#b4)" opacity="0.95"/>
<ellipse cx="611.6" cy="232.2" rx="7.4" ry="8.5" fill="#a39282" filter="url(#b4)" opacity="0.8"/>
<ellipse cx="594.6" cy="214.1" rx="8.5" ry="6.4" fill="#a08268" filter="url(#b2)" opacity="0.7"/>
<ellipse cx="613.7" cy="202.4" rx="11.7" ry="3.7" fill="#6e4832" filter="url(#b4)" opacity="0.7"/>
<rect x="470" y="190" width="180" height="270" filter="url(#nz)" opacity="0.28"/>
<ellipse cx="607.9" cy="231.2" rx="12.2" ry="9.6" fill="#a6948a" filter="url(#b4)" opacity="0.75"/>
<ellipse cx="616.9" cy="230.1" rx="4.8" ry="7.4" fill="#b9aa9c" filter="url(#b2)" opacity="0.55"/>
<path d="M624.9,218.9 C624.5,220.1 623.2,223.6 622.2,225.9 C621.3,228.1 619.9,230.1 619.0,232.2 C618.2,234.4 617.3,237.6 616.9,238.6" fill="none" stroke="#d6ccc0" stroke-width="3.6" stroke-linecap="round" stroke-linejoin="round" filter="url(#b1)" opacity="0.95"/>
<path d="M627.0,215.7 C627.9,215.3 628.9,216.5 630.7,217.9 C632.6,219.3 636.7,222.0 638.2,224.3 C639.6,226.5 639.3,228.8 639.5,231.2 C639.6,233.6 639.4,236.8 639.0,238.6 C638.7,240.4 638.7,241.5 637.1,241.8 C635.6,242.2 632.5,241.5 629.7,240.7 C626.8,240.0 621.7,239.3 620.1,237.6 C618.5,235.8 619.8,232.2 620.1,230.1 C620.5,228.0 621.3,226.4 622.2,224.8 C623.1,223.2 624.6,222.0 625.4,220.5 C626.2,219.0 626.1,216.2 627.0,215.7Z" fill="#3a2b29" filter="url(#b1)"/>
<ellipse cx="633.4" cy="224.3" rx="3.7" ry="2.7" fill="#5e4e4a" filter="url(#b1)" opacity="0.8"/>
<path d="M621.7,225.9 C623.0,225.9 625.0,228.2 627.6,230.1 C630.1,232.1 635.5,235.8 637.1,237.6 C638.7,239.3 638.7,240.3 637.1,240.7 C635.5,241.2 630.6,240.7 627.6,240.2 C624.5,239.7 620.4,239.2 619.0,237.6 C617.7,235.9 619.1,232.1 619.6,230.1 C620.0,228.2 620.4,225.9 621.7,225.9Z" fill="#2e1c1a" filter="url(#b1)"/>
<path d="M624.6,231.7 C624.3,232.9 623.3,237.5 623.1,238.6" fill="none" stroke="#c9bfb2" stroke-width="1.6" stroke-linecap="round" stroke-linejoin="round" filter="url(#b1)" opacity="0.9"/>
<path d="M616.9,238.4 C618.0,237.8 621.0,239.3 623.3,239.7 C625.6,240.1 628.4,240.6 630.7,240.7 C633.1,240.9 636.6,240.1 637.7,240.5 C638.8,241.0 637.8,242.4 637.3,243.4 C636.9,244.4 636.6,245.5 635.0,246.3 C633.4,247.0 630.0,247.9 627.6,247.9 C625.1,247.9 621.9,247.1 620.1,246.3 C618.3,245.5 617.4,244.4 616.9,243.1 C616.4,241.8 615.9,239.0 616.9,238.4Z" fill="#d9cfc2" filter="url(#b1)"/>
<ellipse cx="594.3" cy="214.1" rx="6.6" ry="5.3" fill="#b49e8c" filter="url(#b1)" opacity="0.7"/>
<ellipse cx="594.1" cy="214.1" rx="5.1" ry="3.7" fill="#1c120e" filter="url(#sm)"/>
<ellipse cx="592.7" cy="213.1" rx="1.5" ry="1.1" fill="#5a4030" filter="url(#b1)" opacity="0.8"/>
<ellipse cx="530.5" cy="268.6" rx="3.2" ry="4.7" fill="#8e8480" filter="url(#b1)" opacity="0.9"/>
<ellipse cx="530.5" cy="268.6" rx="1.5" ry="2.3" fill="#2a2220" filter="url(#sm)"/>
<path d="M482.7,360.8 C482.6,362.8 482.3,369.1 482.2,373.2 C482.1,377.3 482.1,381.8 482.0,385.6 C482.0,389.4 481.8,392.7 482.0,396.2 C482.3,399.8 483.4,405.1 483.6,406.9" fill="none" stroke="#b08058" stroke-width="5" stroke-linecap="round" stroke-linejoin="round" filter="url(#b2)" opacity="0.95"/>
<ellipse cx="485.4" cy="336.0" rx="10.6" ry="16.0" fill="#4e3020" filter="url(#b4)" opacity="0.6"/>
<path d="M475.6,320.0 C475.7,323.0 475.8,331.8 476.0,337.7 C476.2,343.6 476.4,349.6 476.7,355.5 C477.0,361.4 477.5,367.3 477.8,373.2 C478.0,379.1 478.4,386.8 478.3,390.9 C478.2,395.1 477.6,396.8 477.4,398.0" fill="none" stroke="#4a2a18" stroke-width="3" stroke-linecap="round" stroke-linejoin="round" filter="url(#b1)" opacity="0.8"/>
<path d="M493.7,327.1 C493.1,329.2 490.8,337.4 490.2,339.5" fill="none" stroke="#c9ae98" stroke-width="3" stroke-linecap="round" stroke-linejoin="round" filter="url(#b1)" opacity="0.8"/>
<path d="M482.7,330.6 C483.2,332.1 484.8,336.8 485.4,339.5 C486.0,342.2 486.1,345.4 486.3,346.6" fill="none" stroke="#5a331f" stroke-width="5" stroke-linecap="round" stroke-linejoin="round" filter="url(#b2)" opacity="0.6"/>
<path d="M479.2,410.8 C479.9,410.3 489.3,409.3 490.2,409.7 C491.0,410.1 492.3,416.7 491.6,417.2 C490.9,417.7 480.7,417.6 479.9,417.2 C479.1,416.7 478.5,411.3 479.2,410.8Z" fill="#15100d" filter="url(#b1)"/>
<path d="M544.4,364.7 C544.5,367.6 544.7,375.9 544.9,382.1 C545.0,388.3 545.2,395.8 545.4,402.0 C545.6,408.2 545.8,414.0 546.1,419.4 C546.4,424.8 547.2,431.8 547.4,434.3" fill="none" stroke="#b88a60" stroke-width="6" stroke-linecap="round" stroke-linejoin="round" filter="url(#b2)" opacity="0.95"/>
<ellipse cx="546.1" cy="385.8" rx="5.5" ry="9.9" fill="#cfa884" filter="url(#b2)" opacity="0.8"/>
<path d="M529.5,334.9 C529.8,337.8 530.5,346.5 531.2,352.3 C531.9,358.1 532.7,363.5 533.7,369.7 C534.6,375.9 536.0,383.4 536.9,389.6 C537.9,395.8 538.6,401.2 539.4,407.0 C540.2,412.8 541.4,420.0 541.9,424.3 C542.4,428.7 542.3,431.6 542.4,433.0" fill="none" stroke="#4a2a18" stroke-width="3.5" stroke-linecap="round" stroke-linejoin="round" filter="url(#b1)" opacity="0.85"/>
<path d="M554.8,334.9 C554.3,337.8 552.5,346.5 551.8,352.3 C551.2,358.1 551.1,364.7 551.1,369.7 C551.1,374.7 552.0,378.0 551.8,382.1 C551.6,386.3 550.3,389.2 549.8,394.5 C549.4,399.9 549.3,408.6 549.3,414.4 C549.3,420.2 549.8,426.8 549.8,429.3" fill="none" stroke="#6a3f26" stroke-width="2" stroke-linecap="round" stroke-linejoin="round" filter="url(#b1)" opacity="0.7"/>
<path d="M543.4,443.0 C544.2,442.3 554.8,441.1 555.8,441.7 C556.8,442.4 558.6,451.5 557.8,452.2 C557.0,452.9 544.8,452.8 543.9,452.2 C542.9,451.6 542.6,443.7 543.4,443.0Z" fill="#15100d" filter="url(#b1)"/>
</g></svg></div></div>
<div class="btn" style="left:603px;top:478px;width:156px;height:26px"><span class="t" style="left:41px;top:5px;letter-spacing:-0.15px">Load Trophy</span></div>
<div class="btn" style="left:603px;top:514px;width:156px;height:26px"><span class="t" style="left:64px;top:5px;transform:scaleX(0.897);transform-origin:0 0">EXIT</span></div>
<span class="t" style="left:16px;top:14px">Hunter:</span><span class="t" style="left:74px;top:14px;transform:scaleX(0.914);transform-origin:0 0">HillBilly (GDL)</span><span class="t" style="left:20px;top:30px">Trophy Info</span><span class="t" style="left:16px;top:52px;letter-spacing:-0.10px">Animal:</span><span class="t" style="left:74px;top:52px;letter-spacing:-0.05px">Whitetail buck</span><span class="t" style="left:187px;top:52px;letter-spacing:0.05px">Weight:</span><span class="t" style="left:249px;top:52px;letter-spacing:-0.05px">180 lb</span><span class="t" style="left:16px;top:72px;letter-spacing:-0.15px">Season:</span><span class="t" style="left:74px;top:72px;letter-spacing:-0.50px">Rut</span><span class="t" style="left:187px;top:72px;letter-spacing:-0.20px">Distance:</span><span class="t" style="left:246px;top:72px;letter-spacing:-0.15px">157 yd</span><span class="t" style="left:16px;top:92px;letter-spacing:-0.10px">Location:</span><span class="t" style="left:74px;top:92px;letter-spacing:-0.15px">Blue Ice Melt Lakes-Hybrid+ (750F)</span><span class="t" style="left:16px;top:112px">Weapon:</span><span class="t" style="left:74px;top:112px;letter-spacing:-0.10px">New Weapon 2</span><span class="t" style="left:16px;top:130px">Action:</span><span class="t" style="left:74px;top:130px;letter-spacing:-0.10px">Autoloader Rifle</span><span class="t" style="left:16px;top:150px;letter-spacing:-0.05px">Ammo:</span><span class="t" style="left:74px;top:150px">.30-06 Springfield</span><span class="t" style="left:16px;top:168px;letter-spacing:-0.10px">Scope:</span><span class="t" style="left:74px;top:168px;letter-spacing:-0.10px">4x12 rifle scope</span><span class="t" style="left:16px;top:188px">Difficulty:</span><span class="t" style="left:74px;top:188px;letter-spacing:-0.30px">Expert</span><span class="t" style="left:130px;top:188px;letter-spacing:-0.15px">Ground Objects:</span><span class="t" style="left:231px;top:188px;transform:scaleX(0.929);transform-origin:0 0">Ultra</span><span class="t" style="left:16px;top:208px;letter-spacing:-0.20px">Exotic Equipment:</span><span class="t" style="left:130px;top:208px;transform:scaleX(0.941);transform-origin:0 0">No</span><span class="t" style="left:16px;top:226px;letter-spacing:-0.05px">Date:</span><span class="t" style="left:73px;top:226px;letter-spacing:0.15px">10/31/2013 at 03:41:49 am</span><span class="t" style="left:16px;top:246px;letter-spacing:0.10px">Antler: 7-points (7) Typical</span><span class="t" style="left:16px;top:266px;letter-spacing:0.10px">Tip to tip distance:</span><span class="t" style="left:151px;top:266px;letter-spacing:-0.30px">32.449</span><span class="t" style="left:16px;top:286px;letter-spacing:-0.10px">Outside spread size:</span><span class="t" style="left:151px;top:286px;letter-spacing:-0.25px">32.267</span><span class="t" style="left:16px;top:306px;letter-spacing:-0.05px">Inside spread size:</span><span class="t" style="left:151px;top:306px;letter-spacing:-0.25px">30.281</span><span class="t" style="left:95px;top:326px;letter-spacing:-0.15px">Left</span><span class="t" style="left:163px;top:326px;transform:scaleX(0.935);transform-origin:0 0">Right</span><span class="t" style="left:232px;top:326px;transform:scaleX(0.900);transform-origin:0 0">Diff</span><span class="t" style="left:306px;top:476px;transform:scaleX(0.899);transform-origin:0 0">FINAL SCORE:</span><span class="t" style="left:396px;top:476px;letter-spacing:-0.30px">162.149</span><span class="t" style="left:303px;top:498px;transform:scaleX(0.943);transform-origin:0 0">Game</span><span class="t" style="left:396px;top:498px">1.2</span><span class="t" style="left:21px;top:346px;transform:scaleX(0.909);transform-origin:0 0">F:</span><span class="t" style="left:21px;top:362px;transform:scaleX(0.900);transform-origin:0 0">G1:</span><span class="t" style="left:21px;top:378px;transform:scaleX(0.900);transform-origin:0 0">G2:</span><span class="t" style="left:21px;top:394px;transform:scaleX(0.900);transform-origin:0 0">G3:</span><span class="t" style="left:21px;top:410px;transform:scaleX(0.900);transform-origin:0 0">G4:</span><span class="t" style="left:21px;top:426px;transform:scaleX(0.900);transform-origin:0 0">G5:</span><span class="t" style="left:21px;top:442px;letter-spacing:-0.15px">H1:</span><span class="t" style="left:21px;top:458px;letter-spacing:-0.15px">H2:</span><span class="t" style="left:21px;top:474px;letter-spacing:-0.15px">H3:</span><span class="t" style="left:21px;top:490px;letter-spacing:-0.15px">H4:</span><span class="t" style="left:21px;top:506px;letter-spacing:0.10px">Totals:</span><span class="t" style="left:21px;top:522px;letter-spacing:-0.05px">Abnorm:</span><span class="t" style="left:101px;top:346px;letter-spacing:-0.10px">29.816</span><span class="t" style="left:171px;top:346px;letter-spacing:-0.05px">32.393</span><span class="t" style="left:244px;top:346px">2.577</span><span class="t" style="left:108px;top:362px">3.471</span><span class="t" style="left:178px;top:362px">4.228</span><span class="t" style="left:244px;top:362px;letter-spacing:-0.05px">0.756</span><span class="t" style="left:101px;top:378px">10.611</span><span class="t" style="left:170px;top:378px">10.234</span><span class="t" style="left:244px;top:378px">0.377</span><span class="t" style="left:108px;top:394px;letter-spacing:-0.05px">0.000</span><span class="t" style="left:178px;top:394px;letter-spacing:-0.05px">9.916</span><span class="t" style="left:244px;top:394px;letter-spacing:-0.05px">9.916</span><span class="t" style="left:108px;top:410px;letter-spacing:-0.05px">0.000</span><span class="t" style="left:178px;top:410px;letter-spacing:-0.05px">0.000</span><span class="t" style="left:244px;top:410px;letter-spacing:-0.05px">0.000</span><span class="t" style="left:108px;top:426px;letter-spacing:-0.05px">0.000</span><span class="t" style="left:178px;top:426px;letter-spacing:-0.05px">0.000</span><span class="t" style="left:244px;top:426px;letter-spacing:-0.05px">0.000</span><span class="t" style="left:108px;top:442px;letter-spacing:0.05px">5.711</span><span class="t" style="left:178px;top:442px;letter-spacing:-0.05px">6.209</span><span class="t" style="left:244px;top:442px">0.498</span><span class="t" style="left:108px;top:458px;letter-spacing:-0.05px">6.529</span><span class="t" style="left:178px;top:458px">7.132</span><span class="t" style="left:244px;top:458px">0.603</span><span class="t" style="left:108px;top:474px;letter-spacing:-0.05px">5.909</span><span class="t" style="left:178px;top:474px;letter-spacing:-0.05px">6.506</span><span class="t" style="left:244px;top:474px">0.597</span><span class="t" style="left:108px;top:490px;letter-spacing:-0.05px">4.264</span><span class="t" style="left:178px;top:490px;letter-spacing:-0.05px">4.695</span><span class="t" style="left:244px;top:490px">0.431</span><span class="t" style="left:101px;top:506px">66.311</span><span class="t" style="left:171px;top:506px;letter-spacing:-0.05px">81.313</span><span class="t" style="left:236px;top:506px">15.756</span><span class="t" style="left:108px;top:522px;letter-spacing:-0.05px">0.000</span><span class="t" style="left:178px;top:522px;letter-spacing:-0.05px">0.000</span><span class="t" style="left:272px;top:522px">-</span>
<div class="bar"></div>
</body></html>
